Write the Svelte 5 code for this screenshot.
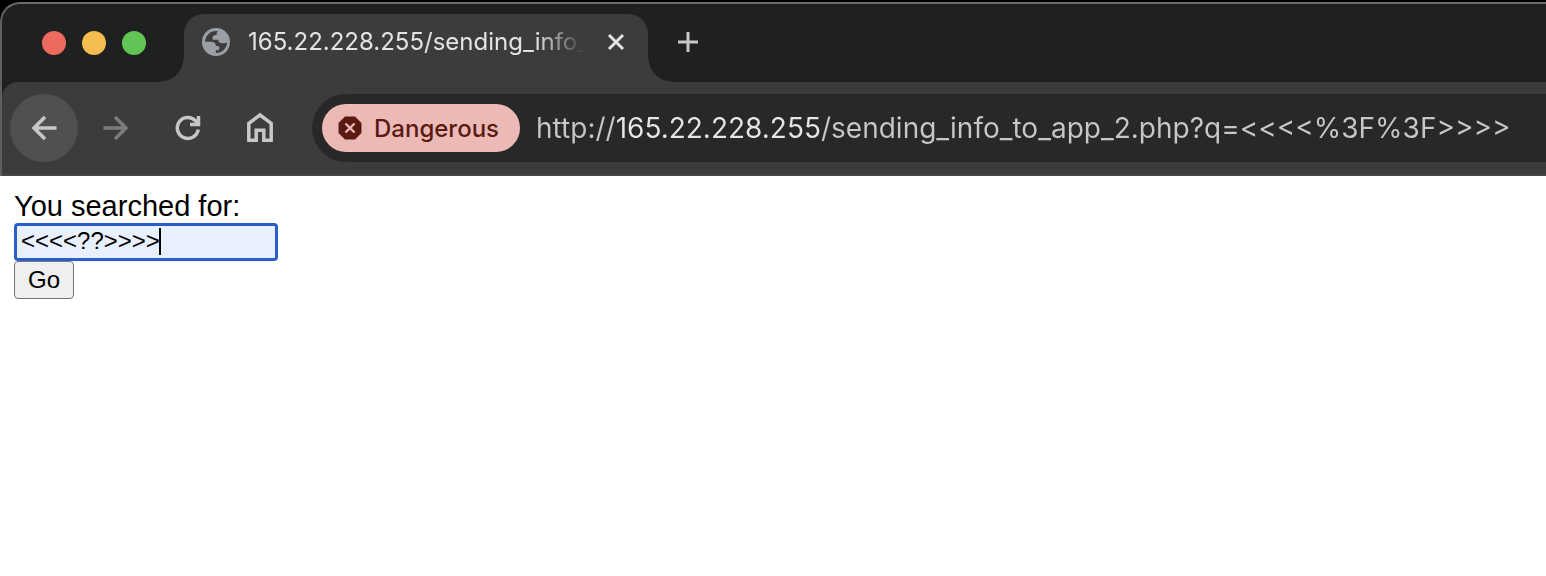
<script>
  let address = $state('http://165.22.228.255/sending_info_to_app_2.php?q=<<<<%3F%3F>>>>');
  let query = $state('<<<<??>>>>');
</script>

<div class="frame">
  <header class="window">
    <div class="strip">
      <div class="lights">
        <button class="light red" aria-label="Close window"></button>
        <button class="light yellow" aria-label="Minimize window"></button>
        <button class="light green" aria-label="Zoom window"></button>
      </div>
      <div class="tab">
        <svg class="globe" viewBox="0 0 28 28" aria-hidden="true">
          <circle cx="14" cy="14" r="14" fill="#9aa0a6" />
          <path d="M15.8 3.2C9 2 3.4 7.200 3.100 13.800H9.300C12.200 13.800 13.800 15.300 13.800 17.600V18H15.400C16.700 18 17.400 18.800 17.400 20.200C17.400 21.500 16.600 22.300 15.200 22.300H13.800V25C20 25 25 20.200 25 14.200C24.200 14.900 23.200 15.200 22 15.200H20.200C17.700 15.200 16.200 13.700 16.200 11.700H10.600V9.800C10.600 8 11.800 7 13.600 7H14.700V5.500C14.700 4.500 15 3.700 15.800 3.200Z" fill="#3c3c3c" />
        </svg>
        <span class="title">165.22.228.255/sending_info_</span>
        <button class="plain close" aria-label="Close tab">
          <svg viewBox="0 0 20 20"><path d="M3 3L17 17M17 3L3 17" stroke="#e3e3e3" stroke-width="3" /></svg>
        </button>
      </div>
      <button class="plain add" aria-label="New tab">
        <svg viewBox="0 0 20 20"><path d="M10 0V20M0 10H20" stroke="#c7c7c7" stroke-width="3" /></svg>
      </button>
    </div>

    <div class="toolbar">
      <nav>
        <button class="nav current" aria-label="Back">
          <svg viewBox="0 0 32 32"><path d="M28.500 16H6M17 5L6 16L17 27" /></svg>
        </button>
        <button class="nav dim" aria-label="Forward">
          <svg viewBox="0 0 32 32"><path d="M3.500 16H26M15 5L26 16L15 27" /></svg>
        </button>
        <button class="nav" aria-label="Reload">
          <svg viewBox="0 0 32 32"><path d="M26.200 17.500A10.500 10.500 0 1 1 23.500 8.800L26.500 12M26.500 4V12.400H18" /></svg>
        </button>
        <button class="nav" aria-label="Home">
          <svg viewBox="0 0 32 32"><path d="M4.800 28.200V11.300L16 3L27.200 11.300V28.200H19.800V18.300H12.200V28.200Z" /></svg>
        </button>
      </nav>
      <div class="omnibox">
        <button class="chip">
          <svg viewBox="0 0 24 24" aria-hidden="true">
            <path d="M7 .5H17L23.500 7V17L17 23.500H7L.5 17V7Z" fill="#5a1a12" />
            <path d="M7.500 7.500L16.500 16.500M16.500 7.500L7.500 16.500" stroke="#ebbab6" stroke-width="2.400" />
          </svg>
          Dangerous
        </button>
        <input class="address" type="text" aria-label="Address" spellcheck="false" bind:value={address} />
      </div>
    </div>
  </header>
</div>

<main>
  <form onsubmit={(e) => e.preventDefault()}>
    <label for="q">You searched for:</label>
    <div class="field">
      <input id="q" name="q" type="text" autocomplete="off" spellcheck="false" bind:value={query} />
      <span class="caret"></span>
    </div>
    <button class="go" type="submit">Go</button>
  </form>
</main>

<style>
  :global(body) {
    background: #fff;
  }

  .frame {
    padding-top: 2px;
    background: #000;
    font-family: Inter, sans-serif;
  }

  .window {
    overflow: hidden;
    border-top: 2px solid #6a6b6a;
    border-left: 2px solid #5e5f5e;
    border-top-left-radius: 20px;
    background: #1f2120;
  }

  button,
  input {
    box-sizing: border-box;
    margin: 0;
    padding: 0;
    font: inherit;
  }

  .strip {
    display: flex;
    align-items: center;
    height: 78px;
    padding-left: 40px;
  }

  .lights {
    display: flex;
    gap: 16px;
    margin-right: 38px;
  }

  .light {
    width: 24px;
    height: 24px;
    border: 0;
    border-radius: 50%;
  }

  .red {
    background: #ed6a5f;
  }

  .yellow {
    background: #f5bd4f;
  }

  .green {
    background: #61c454;
  }

  .tab {
    position: relative;
    display: flex;
    align-items: center;
    align-self: flex-end;
    box-sizing: border-box;
    width: 464px;
    height: 68px;
    padding: 0 16px 12px 18px;
    border-radius: 20px 20px 0 0;
    background: #3c3c3c;
  }

  .tab::before,
  .tab::after {
    content: '';
    position: absolute;
    bottom: 0;
    width: 24px;
    height: 24px;
  }

  .tab::before {
    right: 100%;
    background: radial-gradient(circle at 0 0, transparent 23px, #3c3c3c 24px);
  }

  .tab::after {
    left: 100%;
    background: radial-gradient(circle at 100% 0, transparent 23px, #3c3c3c 24px);
  }

  .globe {
    flex: none;
    width: 28px;
    height: 28px;
  }

  .title {
    flex: 1;
    margin: 0 8px 0 18px;
    color: #e3e3e3;
    font-size: 24px;
    line-height: 32px;
    white-space: nowrap;
    mask-image: linear-gradient(to right, #000 calc(100% - 56px), transparent calc(100% - 8px));
  }

  .plain {
    display: grid;
    place-items: center;
    flex: none;
    border: 0;
    background: none;
  }

  .plain svg {
    width: 20px;
    height: 20px;
  }

  .close {
    width: 32px;
    height: 32px;
  }

  .add {
    height: 40px;
    width: 40px;
    margin: 0 0 2px 20px;
  }

  .toolbar {
    display: flex;
    align-items: center;
    gap: 18px;
    padding: 12px 0 12px 8px;
    border-bottom: 2px solid #474545;
    border-top-left-radius: 16px;
    background: #3c3c3c;
  }

  nav {
    display: flex;
    gap: 4px;
  }

  .nav {
    display: grid;
    place-items: center;
    width: 68px;
    height: 68px;
    border: 0;
    border-radius: 50%;
    background: none;
  }

  .nav svg {
    width: 32px;
    height: 32px;
    fill: none;
    stroke: #c7c7c7;
    stroke-width: 3.5;
  }

  .current {
    background: #505050;
  }

  .dim svg {
    stroke: #7c7c7c;
  }

  .omnibox {
    display: flex;
    flex: 1;
    align-items: center;
    gap: 16px;
    min-width: 0;
    height: 68px;
    padding-left: 10px;
    border-radius: 34px 0 0 34px;
    background: #282828;
  }

  .chip {
    display: flex;
    flex: none;
    align-items: center;
    gap: 12px;
    height: 48px;
    padding: 0 21px 0 16px;
    border: 0;
    border-radius: 24px;
    background: #ebbab6;
    color: #5a1a12;
    font-size: 24px;
    font-weight: 500;
  }

  .chip svg {
    width: 24px;
    height: 24px;
  }

  .address {
    flex: 1;
    min-width: 0;
    height: 40px;
    border: 0;
    outline: 0;
    background: linear-gradient(to right, #c7c7c7 78px, #e6e6e6 78px, #e6e6e6 285px, #c7c7c7 285px);
    background-clip: text;
    color: transparent;
    caret-color: #e6e6e6;
    font-size: 28px;
  }

  main {
    padding: 14px;
    color: #000;
    font-family: 'Liberation Sans', Arial, sans-serif;
  }

  form {
    display: flex;
    flex-direction: column;
    align-items: flex-start;
  }

  label {
    font-size: 29px;
    line-height: 33px;
  }

  .field {
    position: relative;
  }

  .field input {
    display: block;
    width: 264px;
    height: 38px;
    padding: 0 4px 2px;
    border: 3px solid #2a5fcb;
    border-radius: 4px;
    outline: 0;
    background: #e8f0fe;
    color: #000;
    caret-color: transparent;
    font-size: 24px;
  }

  .caret {
    position: absolute;
    top: 5px;
    left: 145px;
    width: 2px;
    height: 27px;
    background: #000;
  }

  .go {
    height: 38px;
    padding: 0 13px;
    border: 1px solid #767676;
    border-radius: 4px;
    background: #efefef;
    color: #000;
    font-size: 24px;
  }
</style>
